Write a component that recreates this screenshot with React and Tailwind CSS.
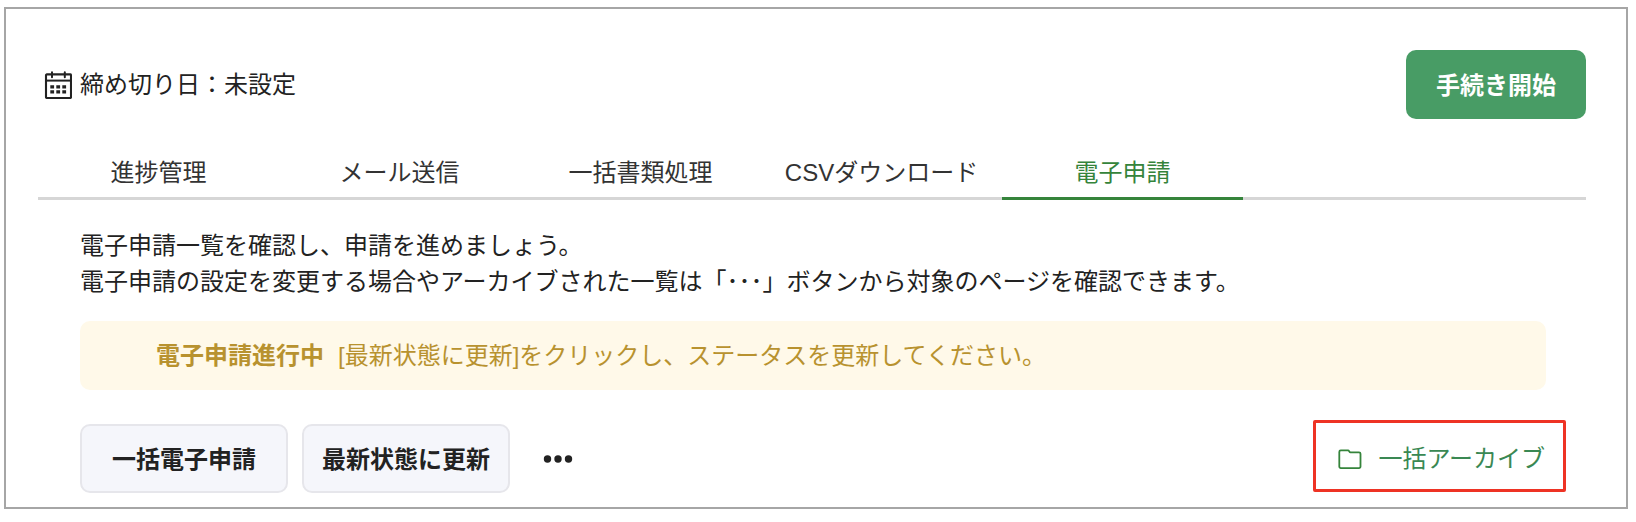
// App.jsx
import React, { useState } from 'react';

const TABS = [
  { key: 'progress', label: '進捗管理' },
  { key: 'mail', label: 'メール送信' },
  { key: 'documents', label: '一括書類処理' },
  { key: 'csv', label: 'CSVダウンロード' },
  { key: 'eapply', label: '電子申請' },
];

const CalendarIcon = () => (
  <svg className="h-7 w-7 shrink-0" viewBox="0 0 28 28" fill="none" aria-hidden="true">
    <rect x="2" y="3.4" width="25" height="23.6" rx="0.8" stroke="#222" strokeWidth="2.1" />
    <path d="M1 9.6h27" stroke="#222" strokeWidth="2" />
    <path d="M8 1.200v5M20.800 1.200v5" stroke="#222" strokeWidth="2" strokeLinecap="round" />
    <path d="M6.300 15.800h16M6.300 20.800h16" stroke="#222" strokeWidth="3.200" strokeDasharray="3.800 2.200" />
  </svg>
);

const FolderIcon = () => (
  <svg className="h-6 w-6 shrink-0" viewBox="0 0 24 24" fill="none" aria-hidden="true">
    <path
      d="M1.300 4.900a1.500 1.500 0 0 1 1.500-1.500h7.200a1.200 1.200 0 0 1 1 .6l.5.8a1.100 1.100 0 0 0 .9.5h8.600a1.500 1.500 0 0 1 1.500 1.500v12.800a1.500 1.500 0 0 1-1.500 1.500H2.800a1.500 1.500 0 0 1-1.500-1.500z"
      stroke="#35843b"
      strokeWidth="1.800"
    />
  </svg>
);

const DotsIcon = () => (
  <svg className="h-8 w-8" viewBox="0 0 32 32" fill="#222" aria-hidden="true">
    <circle cx="5.500" cy="16" r="3.700" />
    <circle cx="16" cy="16" r="3.700" />
    <circle cx="26.500" cy="16" r="3.700" />
  </svg>
);

const SecondaryButton = ({ children }) => (
  <button
    type="button"
    className="h-[69px] w-52 rounded-[10px] border-2 border-[#e6e6eb] bg-[#f5f6fb] pt-0.5 font-bold whitespace-nowrap"
  >
    {children}
  </button>
);

const App = () => {
  const [activeTab, setActiveTab] = useState('eapply');

  return (
    <div className="bg-white pt-[7px] pr-2 pb-3 pl-1 font-['Liberation_Sans','Noto_Sans_CJK_JP',sans-serif] text-2xl leading-9 text-[#222]">
      <main className="border-2 border-[#a6a6a6] px-8 pt-[41px] pb-3.5">
        {/* Header */}
        <header className="flex items-center justify-between pr-2 pl-[6px]">
          <div className="flex items-center gap-2">
            <CalendarIcon />
            <p>締め切り日：未設定</p>
          </div>
          <button type="button" className="h-[69px] w-[180px] rounded-[10px] bg-[#489c65] pt-0.5 font-bold text-white">
            手続き開始
          </button>
        </header>

        {/* Tabs */}
        <div role="tablist" className="mt-9 mr-2 flex border-b-3 border-[#d6d6d6]">
          {TABS.map((tab) => (
            <button
              key={tab.key}
              type="button"
              role="tab"
              aria-selected={activeTab === tab.key}
              onClick={() => setActiveTab(tab.key)}
              className={`-mb-[3px] w-[241px] border-b-3 pb-1.5 whitespace-nowrap ${
                activeTab === tab.key ? 'border-[#35843b] text-[#35843b]' : 'border-transparent text-[#333]'
              }`}
            >
              {tab.label}
            </button>
          ))}
        </div>

        <section className="mt-7 pr-12 pl-[42px]">
          <p>
            電子申請一覧を確認し、申請を進めましょう。
            <br />
            電子申請の設定を変更する場合やアーカイブされた一覧は「･･･」ボタンから対象のページを確認できます。
          </p>

          {/* Status notice */}
          <div role="status" className="mt-[21px] flex h-[69px] items-center gap-3.5 rounded-[10px] bg-[#fff9e9] px-[76px] text-[#b8922f]">
            <strong className="font-bold">電子申請進行中</strong>
            <span>[最新状態に更新]をクリックし、ステータスを更新してください。</span>
          </div>
        </section>

        {/* Actions */}
        <div className="mt-[30px] flex items-start justify-between pr-7 pl-[42px]">
          <div className="flex items-center gap-3.5 pt-1">
            <SecondaryButton>一括電子申請</SecondaryButton>
            <SecondaryButton>最新状態に更新</SecondaryButton>
            <button type="button" aria-label="その他" className="flex px-[18px]">
              <DotsIcon />
            </button>
          </div>
          <button
            type="button"
            className="flex h-[72px] items-center gap-4 rounded-xs border-3 border-[#ee3324] pt-1.5 pr-[18px] pl-[22px] whitespace-nowrap text-[#3a8853]"
          >
            <FolderIcon />
            一括アーカイブ
          </button>
        </div>
      </main>
    </div>
  );
};

export default App;
